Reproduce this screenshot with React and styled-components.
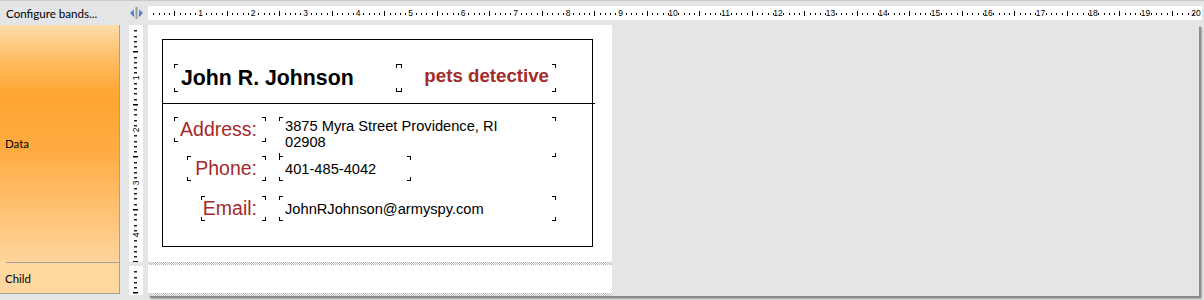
import React from 'react';
import styled, {createGlobalStyle} from 'styled-components';

const GlobalStyle = createGlobalStyle`
  html, body {
    margin: 0;
    padding: 0;
    background: #e4e5e7;
  }
`;

const MM = 5.25;

const corners = (c) => `
  linear-gradient(${c},${c}) left top / 4px 1px no-repeat,
  linear-gradient(${c},${c}) left top / 1px 4px no-repeat,
  linear-gradient(${c},${c}) right top / 4px 1px no-repeat,
  linear-gradient(${c},${c}) right top / 1px 4px no-repeat,
  linear-gradient(${c},${c}) left bottom / 4px 1px no-repeat,
  linear-gradient(${c},${c}) left bottom / 1px 4px no-repeat,
  linear-gradient(${c},${c}) right bottom / 4px 1px no-repeat,
  linear-gradient(${c},${c}) right bottom / 1px 4px no-repeat
`;

const HorizontalRuler = () => {
  let marks = [];
  for (let k = 1; k <= 200; k++) {
    let x = k * MM;
    if (k % 10 === 0) {
      marks.push(<text key={k} x={k === 200 ? x - 2 : x} y={10} fontSize="8.5" textAnchor="middle" fill="#000" fontFamily="Liberation Sans, Arial, sans-serif">{k / 10}</text>);
    }
    else if (k % 5 === 0) {
      marks.push(<rect key={k} x={Math.round(x)} y={5} width={1} height={5} fill="#000" />);
    }
    else {
      marks.push(<rect key={k} x={Math.round(x)} y={7} width={1} height={2} fill="#000" />);
    }
  }
  return <svg width="1054" height="14">{marks}</svg>;
};

const VerticalRuler = ({height, count}) => {
  let marks = [];
  for (let k = 1; k <= count; k++) {
    let y = Math.round(k * MM);
    if (k % 10 === 0) {
      marks.push(<text key={k} x={0} y={0} fontSize="8.5" textAnchor="middle" fill="#000" fontFamily="Liberation Sans, Arial, sans-serif" transform={`translate(10 ${y}) rotate(-90)`}>{k / 10}</text>);
    }
    else if (k % 5 === 0) {
      marks.push(<rect key={k} x={4} y={y} width={5} height={1.5} fill="#000" />);
    }
    else {
      marks.push(<rect key={k} x={5} y={y} width={3} height={1.5} fill="#222" />);
    }
  }
  return <svg width="14" height={height}>{marks}</svg>;
};

const SplitterIcon = () => (
  <svg width="16" height="14" viewBox="0 0 16 14">
    <defs>
      <linearGradient id="blue" x1="0" y1="0" x2="0" y2="1">
        <stop offset="0" stopColor="#7fa6e8" />
        <stop offset="1" stopColor="#2f5fbf" />
      </linearGradient>
    </defs>
    <path d="M5 3 L1 7 L5 11 Z" fill="url(#blue)" />
    <rect x="6.5" y="1" width="2" height="12" fill="#9a9a9a" />
    <path d="M10 3 L14 7 L10 11 Z" fill="url(#blue)" />
  </svg>
);

export default function App() {
  return (
    <Screen>
      <GlobalStyle />
      <TopBar>
        <ConfigureLabel>Configure bands...</ConfigureLabel>
        <Splitter><SplitterIcon /></Splitter>
        <RulerStrip><HorizontalRuler /></RulerStrip>
      </TopBar>

      <Body>
        <BandPanel>
          <Band $height={238} $data>Data</Band>
          <Band $height={30}>Child</Band>
        </BandPanel>

        <RulerColumn>
          <RulerPiece $height={237}><VerticalRuler height={237} count={45} /></RulerPiece>
          <RulerPiece $height={29}><VerticalRuler height={29} count={5} /></RulerPiece>
        </RulerColumn>

        <Surface>
          <Page>
            <DataBand>
              <Card>
                <Header>
                  <Control $width={228}>
                    <Name>John R. Johnson</Name>
                  </Control>
                  <Control $width={160} $overlap>
                    <Title>pets detective</Title>
                  </Control>
                </Header>
                <Divider />
                <Fields>
                  <Label $width={92}>Address:</Label>
                  <Value $width={277} $height={40} $multiline>3875 Myra Street Providence, RI<br />02908</Value>
                  <Label $width={79}>Phone:</Label>
                  <Value $width={132}>401-485-4042</Value>
                  <Label $width={65}>Email:</Label>
                  <Value $width={277}>JohnRJohnson@armyspy.com</Value>
                </Fields>
              </Card>
            </DataBand>
            <Hatch />
            <ChildBand />
            <Hatch />
          </Page>
        </Surface>
      </Body>
    </Screen>
  );
}

const Screen = styled.div`
  width: 1204px;
  height: 300px;
  overflow: hidden;
  background: #e4e5e7;
  font-family: Lato, "Liberation Sans", sans-serif;
`;

const TopBar = styled.div`
  height: 25px;
  box-sizing: border-box;
  border-top: 1px solid #c9cacc;
  display: flex;
  align-items: center;
`;

const ConfigureLabel = styled.div`
  width: 123px;
  padding-left: 6px;
  font-size: 11.6px;
  color: #000;
  white-space: nowrap;
`;

const Splitter = styled.div`
  width: 19px;
  height: 14px;
  display: flex;
`;

const RulerStrip = styled.div`
  width: 1054px;
  height: 14px;
  background: #fff;
  display: flex;
`;

const Body = styled.div`
  display: flex;
  align-items: flex-start;
`;

const BandPanel = styled.div`
  width: 119px;
  border-right: 1px solid #a0a0a0;
  border-bottom: 1px solid #a0a0a0;
  display: flex;
  flex-direction: column;
`;

const Band = styled.div`
  height: ${props => props.$height}px;
  display: flex;
  align-items: center;
  padding-left: 5px;
  font-size: 11.5px;
  color: #000;
  background: ${props => props.$data
    ? 'linear-gradient(#ffdcaa 0%, #ffb85a 17%, #ffa633 29%, #ffab40 52%, #ffd59b 100%)'
    : '#ffd79f'};
  box-sizing: border-box;
  ${props => props.$data && `
    border-bottom: 1px solid #a0a0a0;
    border-image: linear-gradient(to right, transparent 7px, #a0a0a0 7px) 1;
  `}
`;

const RulerColumn = styled.div`
  margin-left: 9px;
  width: 14px;
  display: flex;
  flex-direction: column;
  gap: 4px;
`;

const RulerPiece = styled.div`
  height: ${props => props.$height}px;
  background: #fff;
  display: flex;
`;

const Surface = styled.div`
  margin-left: 5px;
  width: 1051px;
  height: 271px;
  background: #e4e5e7;
  box-shadow: 2px 2px 1px #8a8a8a, 3px 3px 2px #b0b0b0;
  display: flex;
`;

const Page = styled.div`
  width: 464px;
  display: flex;
  flex-direction: column;
`;

const DataBand = styled.div`
  height: 237px;
  background: #fff;
  padding: 14px 0 0 14px;
  box-sizing: border-box;
`;

const Hatch = styled.div`
  height: 3px;
  background: repeating-conic-gradient(#b4b4b4 0 25%, #fff 0 50%) 0 0 / 2px 2px;
`;

const ChildBand = styled.div`
  height: 28px;
  background: #fff;
`;

const Card = styled.div`
  width: 431px;
  height: 208px;
  box-sizing: border-box;
  border: 1px solid #000;
  font-family: "Liberation Sans", Arial, sans-serif;
`;

const Header = styled.div`
  height: 63px;
  box-sizing: border-box;
  padding: 24px 0 0 11px;
  display: flex;
  align-items: flex-start;
`;

const Divider = styled.div`
  height: 1px;
  background: #000;
  margin-left: -1px;
  margin-right: -3px;
`;

const Control = styled.div`
  width: ${props => props.$width}px;
  height: 28px;
  flex: none;
  box-sizing: border-box;
  padding: 0 7px;
  margin-left: ${props => props.$overlap ? '-6px' : '0'};
  background: ${corners('#000')};
  display: flex;
  align-items: center;
  justify-content: ${props => props.$overlap ? 'flex-end' : 'flex-start'};
`;

const Name = styled.span`
  font-size: 21.3px;
  font-weight: bold;
  color: #000;
  line-height: 28px;
`;

const Title = styled.span`
  font-size: 18.7px;
  font-weight: bold;
  color: #a52a2a;
  line-height: 24px;
  margin-bottom: 4px;
`;

const Fields = styled.div`
  display: grid;
  grid-template-columns: 103px 277px;
  grid-template-rows: 39px 40px 25px;
  column-gap: 13px;
  padding-top: 13px;
  align-items: start;
`;

const Label = styled.div`
  justify-self: end;
  width: ${props => props.$width}px;
  height: 25px;
  box-sizing: border-box;
  padding-right: 9px;
  background: ${corners('#000')};
  text-align: right;
  font-size: 19.5px;
  line-height: 25px;
  color: #a52a2a;
  white-space: nowrap;
`;

const Value = styled.div`
  width: ${props => props.$width}px;
  height: ${props => props.$height || 25}px;
  box-sizing: border-box;
  padding: ${props => props.$multiline ? '1px 6px 0' : '0 6px'};
  background: ${corners('#000')};
  font-size: 14.67px;
  line-height: ${props => props.$multiline ? '16px' : '26px'};
  color: #000;
  white-space: nowrap;
`;
